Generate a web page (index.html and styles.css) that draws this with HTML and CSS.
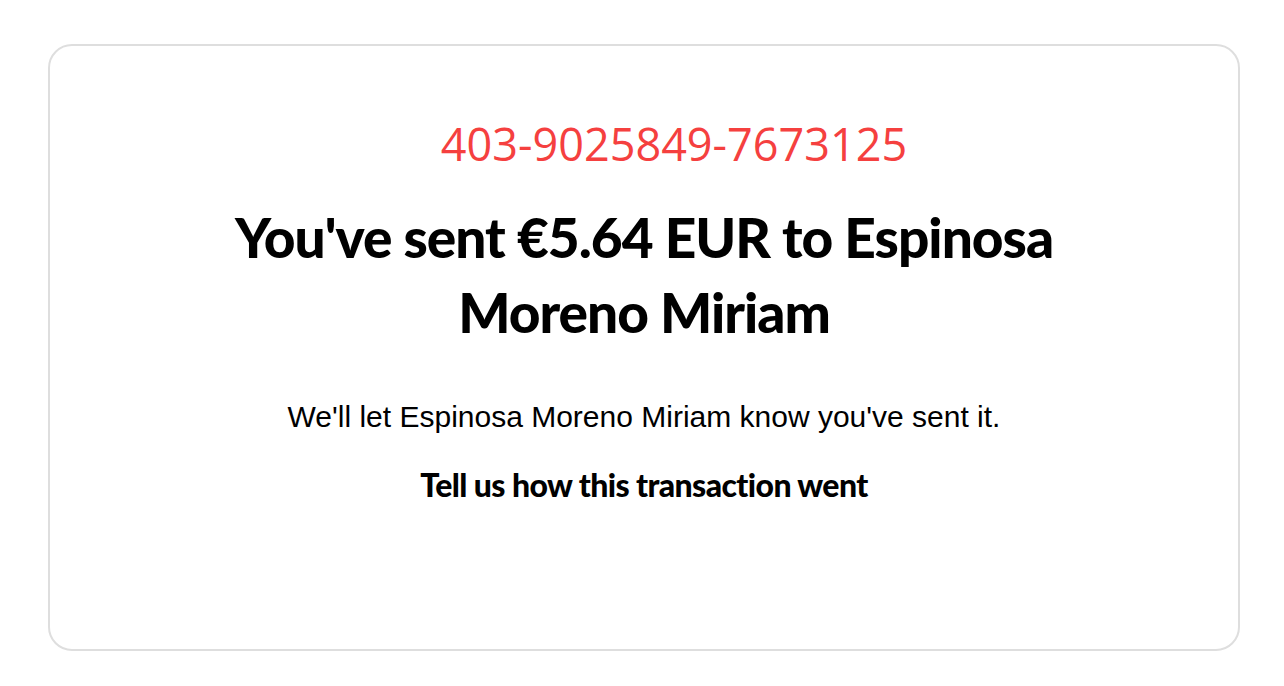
FILE: index.html
```html
<!DOCTYPE html>
<html>
<head>
    <meta charset="utf-8">
    <title>Payment sent</title>
    <link rel="stylesheet" href="styles.css">
</head>
<body>
    <div class="card">
        <div class="ref-no">403-9025849-7673125</div>
        <h1>You've sent €5.64 EUR to Espinosa Moreno Miriam</h1>
        <p class="note">We'll let Espinosa Moreno Miriam know you've sent it.</p>
        <p class="feedback">Tell us how this transaction went</p>
    </div>
</body>
</html>
```
FILE: styles.css
```css
body {
    margin: 0;
    padding: 44px 44px 36px 48px;
    background-color: #fff;
    font-family: "Liberation Sans", Arial, sans-serif;
    color: #000;
}
.card {
    border: 2px solid #dedede;
    border-radius: 24px;
    height: 607px;
    box-sizing: border-box;
    display: flex;
    flex-direction: column;
    align-items: center;
    padding-top: 73px;
}
.ref-no {
    font-family: "Open Sans", "DejaVu Sans", sans-serif;
    font-size: 45px;
    line-height: 50px;
    color: #f5403f;
    margin-left: 60px;
}
h1 {
    font-family: "Lato", sans-serif;
    font-weight: 900;
    font-size: 55px;
    line-height: 75px;
    letter-spacing: -1px;
    text-align: center;
    max-width: 860px;
    margin: 31px 0 0;
}
.note {
    font-size: 30px;
    line-height: 36px;
    margin: 49px 0 0;
}
.feedback {
    font-family: "Lato", sans-serif;
    font-weight: 900;
    font-size: 32px;
    line-height: 38px;
    letter-spacing: -0.6px;
    margin: 31px 0 0;
}
```
